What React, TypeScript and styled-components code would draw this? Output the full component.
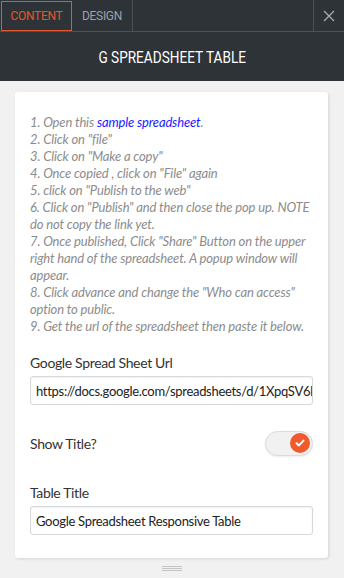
import React from "react";
import styled, { createGlobalStyle } from "styled-components";

const Global = createGlobalStyle`
  html, body { margin: 0; padding: 0; }
  body { width: 344px; height: 578px; overflow: hidden; background: #f1f1f1; font-family: "Lato", "Liberation Sans", sans-serif; }
  * { box-sizing: border-box; }
`;

const Shell = styled.div`
  width: 344px;
  height: 578px;
  display: flex;
  flex-direction: column;
  background: #f1f1f1;
`;

const TabBar = styled.div`
  height: 32px;
  display: flex;
  background: #2e3337;
  border-bottom: 1px solid #4b5157;
`;

const Tab = styled.div<{ $active?: boolean }>`
  display: flex;
  align-items: center;
  justify-content: center;
  width: ${(p) => (p.$active ? "71px" : "61px")};
  margin: ${(p) => (p.$active ? "1px 0 0 1px" : "0")};
  height: ${(p) => (p.$active ? "30px" : "31px")};
  border: ${(p) => (p.$active ? "1px solid #e4572e" : "none")};
  border-right: ${(p) => (p.$active ? "1px solid #e4572e" : "1px solid #4b5157")};
  color: ${(p) => (p.$active ? "#e8552c" : "#98a2aa")};
  font-family: "Roboto", sans-serif;
  font-size: 12px;
  letter-spacing: -0.3px;
`;

const Spacer = styled.div`
  flex: 1;
`;

const CloseBtn = styled.div`
  width: 31px;
  height: 31px;
  border-left: 1px solid #4b5157;
  display: flex;
  align-items: center;
  justify-content: center;
`;

const TitleBar = styled.div`
  height: 49px;
  background: #2e3337;
  display: flex;
  align-items: center;
  justify-content: center;
`;

const Title = styled.span`
  display: inline-block;
  color: #ffffff;
  font-family: "Roboto", sans-serif;
  font-weight: 400;
  font-size: 17px;
  transform: scaleX(0.8);
  margin-top: 1px;
  white-space: nowrap;
`;

const Body = styled.div`
  flex: 1;
  padding: 11px 16px 0 15px;
  display: flex;
  flex-direction: column;
`;

const Card = styled.div`
  background: #fff;
  border-radius: 3px;
  box-shadow: 1px 1px 3px rgba(0, 0, 0, 0.12);
  height: 466px;
  padding: 22px 15px 0 15px;
  display: flex;
  flex-direction: column;
`;

const Steps = styled.div`
  font-family: "Lato", sans-serif;
  font-style: italic;
  font-size: 13px;
  line-height: 17px;
  color: #8c8c8c;
  letter-spacing: -0.15px;
`;

const Link = styled.span`
  color: #1a1aff;
`;

const Label = styled.div<{ $gap: number }>`
  font-family: "Lato", sans-serif;
  font-size: 14px;
  letter-spacing: -0.35px;
  color: #333;
  margin-top: ${(p) => p.$gap}px;
  margin-bottom: 5px;
`;

const Input = styled.div`
  height: 29px;
  border: 1px solid #d5d8dc;
  border-radius: 3px;
  padding: 0 5px;
  display: flex;
  align-items: center;
  font-family: "Lato", sans-serif;
  font-size: 13px;
  letter-spacing: -0.3px;
  color: #222;
  overflow: hidden;
  white-space: nowrap;
  box-shadow: inset 0 1px 2px rgba(0,0,0,0.06);
`;

const ToggleRow = styled.div`
  margin-top: 25px;
  display: flex;
  align-items: center;
  justify-content: space-between;
  font-family: "Lato", sans-serif;
  font-size: 14px;
  letter-spacing: -0.35px;
  color: #333;
  height: 26px;
`;

const Track = styled.div`
  width: 48px;
  height: 25px;
  border-radius: 13px;
  background: #f1f1f1;
  border: 1px solid #dcdcdc;
  display: flex;
  align-items: center;
  justify-content: flex-end;
  padding-right: 2px;
  box-shadow: 0 1px 2px rgba(0,0,0,0.08);
`;

const Knob = styled.div`
  width: 20px;
  height: 20px;
  border-radius: 50%;
  background: #f05a2c;
  display: flex;
  align-items: center;
  justify-content: center;
`;

const Handle = styled.div`
  height: 20px;
  display: flex;
  flex-direction: column;
  align-items: center;
  justify-content: center;
  gap: 1px;
`;

const HandleLine = styled.div`
  width: 20px;
  height: 1px;
  background: #c4c4c4;
`;

export default function App() {
  return (
    <Shell>
      <Global />
      <TabBar>
        <Tab $active>CONTENT</Tab>
        <Tab>DESIGN</Tab>
        <Spacer />
        <CloseBtn>
          <svg width="12" height="12" viewBox="0 0 12 12">
            <path d="M1 1L11 11M11 1L1 11" stroke="#a8b0b6" strokeWidth="1.2" />
          </svg>
        </CloseBtn>
      </TabBar>
      <TitleBar>
        <Title>G SPREADSHEET TABLE</Title>
      </TitleBar>
      <Body>
        <Card>
          <Steps>
            1. Open this <Link>sample spreadsheet</Link>.<br />
            2. Click on "file"<br />
            3. Click on "Make a copy"<br />
            4. Once copied , click on "File" again<br />
            5. click on "Publish to the web"<br />
            6. Click on "Publish" and then close the pop up. NOTE do not copy the link yet.<br />
            7. Once published, Click "Share" Button on the upper right hand of the spreadsheet. A popup window will appear.<br />
            8. Click advance and change the "Who can access" option to public.<br />
            9. Get the url of the spreadsheet then paste it below.
          </Steps>
          <Label $gap={19}>Google Spread Sheet Url</Label>
          <Input>https://docs.google.com/spreadsheets/d/1XpqSV6kLmN0</Input>
          <ToggleRow>
            <span>Show Title?</span>
            <Track>
              <Knob>
                <svg width="10" height="8" viewBox="0 0 10 8">
                  <path d="M1.5 4.2L3.9 6.4L8.5 1.6" stroke="#fff" strokeWidth="2" fill="none" strokeLinecap="round" strokeLinejoin="round" />
                </svg>
              </Knob>
            </Track>
          </ToggleRow>
          <Label $gap={28}>Table Title</Label>
          <Input>Google Spreadsheet Responsive Table</Input>
        </Card>
        <Handle>
          <HandleLine />
          <HandleLine />
          <HandleLine />
        </Handle>
      </Body>
    </Shell>
  );
}
